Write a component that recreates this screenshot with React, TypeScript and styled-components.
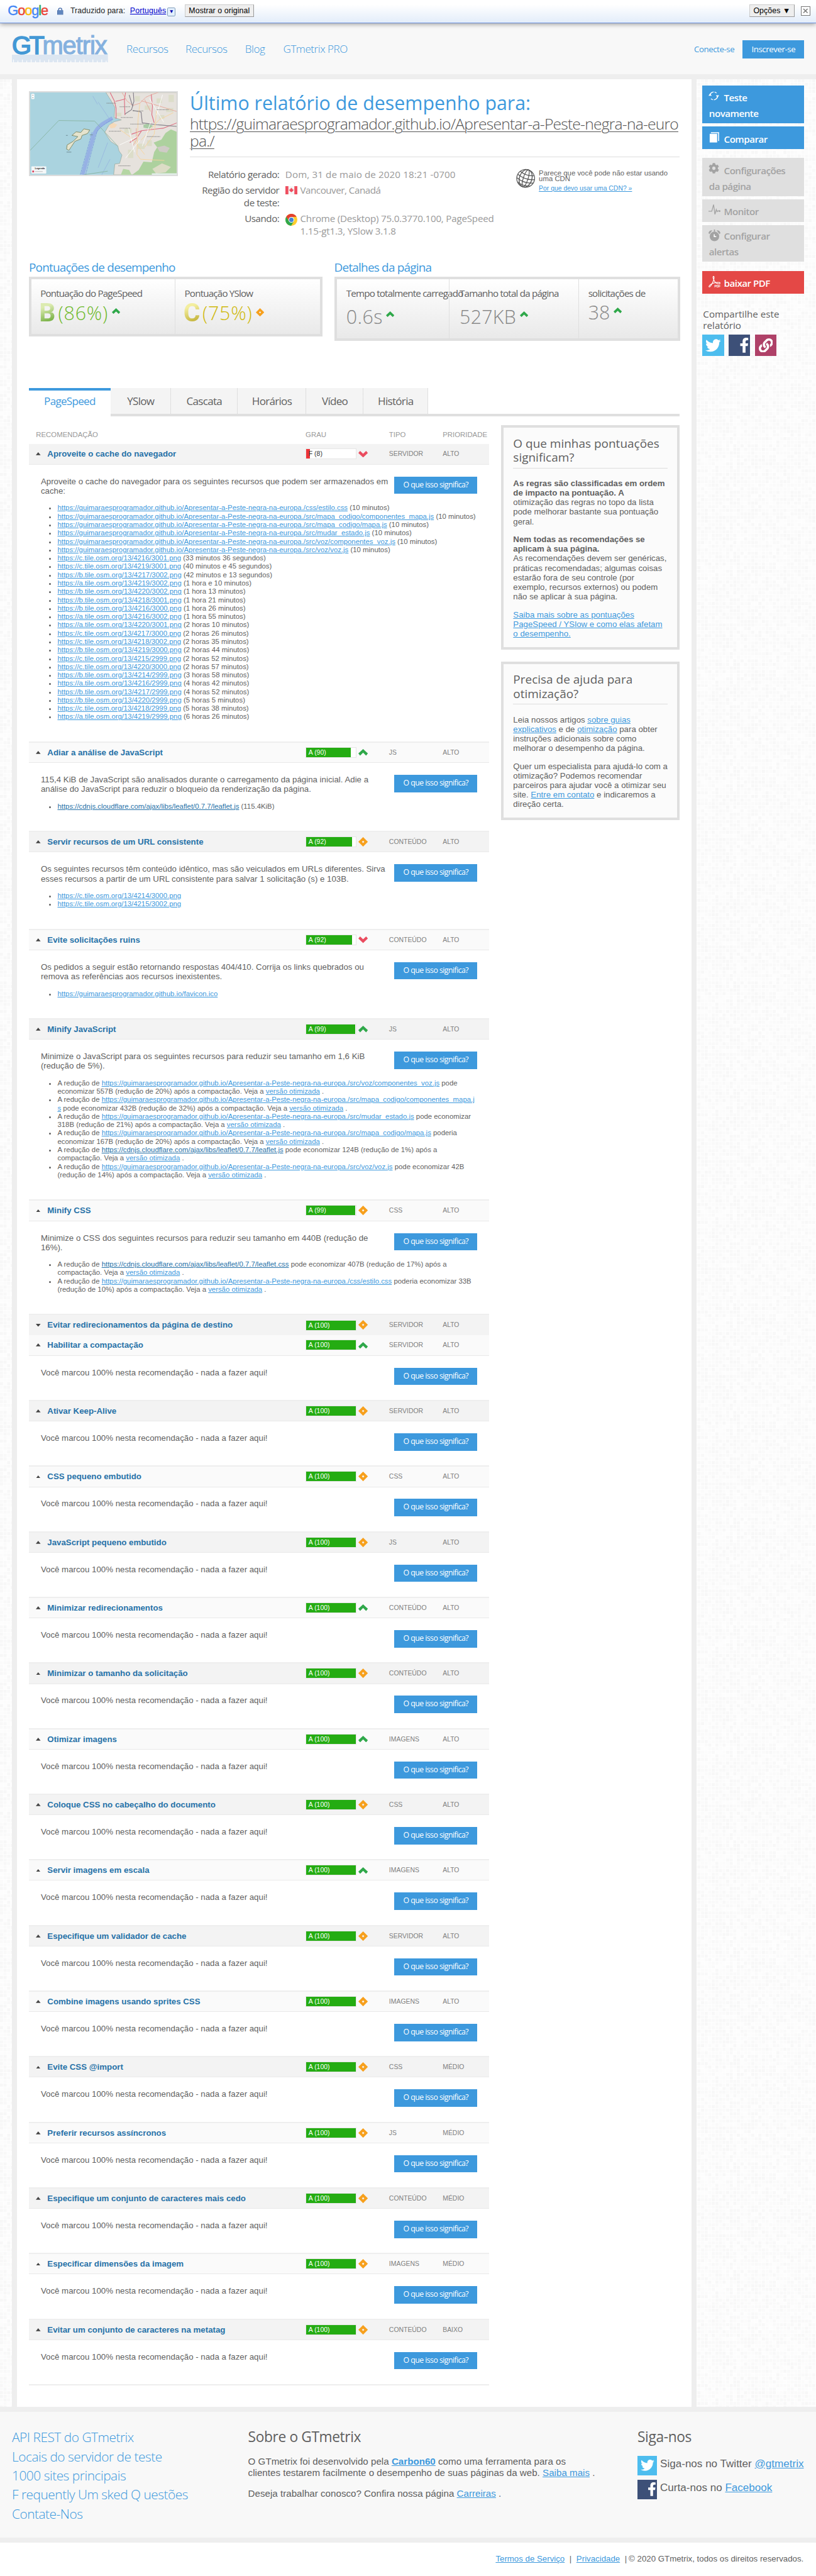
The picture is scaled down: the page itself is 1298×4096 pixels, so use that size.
import React from 'react';
import styled, { createGlobalStyle, css } from 'styled-components';
import { FaTwitter, FaFacebookF, FaLink, FaCog } from 'react-icons/fa';

const BLUE = '#3d99dd';
const DARK_BLUE = '#2772a8';
const TEXT = '#5f5f5f';
const LINE = '#dfdfdf';
const SANS = '"Liberation Sans", Arial, sans-serif';
const DISPLAY = '"Open Sans", "Noto Sans", sans-serif';

/* Faint grid of small squares used behind the page */
const buildTexture = () => {
  let seed = 7;
  let cells = '';
  for (let y = 0; y < 30; y++) {
    for (let x = 0; x < 30; x++) {
      seed = (seed * 16807) % 2147483647;
      const shade = 247 + (seed % 7);
      cells += `<rect x="${x * 6}" y="${y * 6}" width="5" height="5" fill="rgb(${shade},${shade},${shade})"/>`;
    }
  }
  const svg = `<svg xmlns="http://www.w3.org/2000/svg" width="180" height="180"><rect width="180" height="180" fill="#fff"/>${cells}</svg>`;
  return `url("data:image/svg+xml,${encodeURIComponent(svg)}")`;
};
const TEXTURE = buildTexture();

const GlobalStyle = createGlobalStyle`
  html, body { margin: 0; padding: 0; background: #fff; }
  body { overflow: hidden; }
  *, *::before, *::after { box-sizing: border-box; }
  h1, h2, h3, p, ul { margin: 0; padding: 0; font-weight: 400; }
  svg { display: block; flex: none; }
`;

const Page = styled.div`
  zoom: 0.94858;
  width: 1368.5px;
  height: 4318px;
  background: #fff;
  color: ${TEXT};
  font: 14px/16px ${SANS};
  white-space: nowrap;
`;

const A = styled.a<{ $dark?: boolean; $bold?: boolean }>`
  color: ${(p) => (p.$dark ? DARK_BLUE : BLUE)};
  font-weight: ${(p) => (p.$bold ? 700 : 'inherit')};
  text-decoration: underline;
`;

/* ---------- translate bar ---------- */
const TranslateBar = styled.div`
  position: relative;
  z-index: 1;
  height: 39px;
  display: flex;
  align-items: flex-start;
  padding: 7px 10px 0 13px;
  background: linear-gradient(#fff 20%, #e3edfa);
  border-bottom: 1px solid #6b90da;
  box-shadow: 0 2px 8px rgba(0, 0, 0, 0.4);
  color: #222;
  font-size: 13px;
  line-height: 23px;
`;
const GoogleWord = styled.span`
  width: 83px;
  font-size: 23px;
  line-height: 21px;
  letter-spacing: -1.15px;
`;
const Letter = styled.span<{ $c: string }>`
  color: ${(p) => p.$c};
  -webkit-text-stroke: 0.4px ${(p) => p.$c};
`;
const BarText = styled.span`
  margin: 0 8px 0 12px;
  letter-spacing: 0.1px;
`;
const BarLink = styled.a`
  color: #0000cc;
  text-decoration: underline;
  letter-spacing: 0.15px;
`;
const Picker = styled.span`
  width: 14px;
  height: 14px;
  margin: 6px 15px 0 2px;
  border: 1px solid #7f9db9;
  border-radius: 2px;
  background: #e3f0ff;
  color: #0000aa;
  font-size: 9px;
  line-height: 11px;
  text-align: center;
`;
const SysButton = styled.button`
  height: 22px;
  padding: 0 6px;
  border: 1px solid;
  border-color: #ccc #999 #999 #ccc;
  background: #eee;
  color: #000;
  font: 13px/19px ${SANS};
  letter-spacing: 0.1px;
  white-space: nowrap;
`;
const BarRight = styled.div`
  display: flex;
  gap: 11px;
  margin-left: auto;
`;
const CloseBox = styled.span`
  width: 15px;
  height: 15px;
  margin-top: 4px;
  border: 1px solid #777;
  background: #fff;
  display: flex;
  align-items: center;
  justify-content: center;
`;

/* ---------- header ---------- */
const Header = styled.header`
  height: 94px;
  display: flex;
  align-items: flex-start;
  padding: 0 20px;
  background: #f8f8f8;
  border-bottom: 8.44px solid #eee;
`;
const Logo = styled.div`
  width: 161px;
  padding-top: 16px;
  background: linear-gradient(#dce6f1, #dce6f1) 0 53px / 161px 13px no-repeat;
`;
const LogoWord = styled.div`
  display: flex;
  height: 37px;
  font-size: 42px;
  line-height: 44px;
`;
const LogoPart = styled.span<{ $c: string; $ls: number; $stroke: number }>`
  color: ${(p) => p.$c};
  letter-spacing: ${(p) => p.$ls}px;
  -webkit-text-stroke: ${(p) => `${p.$stroke}px ${p.$c}`};
`;
const Nav = styled.nav`
  display: flex;
  gap: 30px;
  margin: 32px 0 0 31px;
`;
const NavLink = styled.a<{ $w: number }>`
  width: ${(p) => p.$w}px;
  color: ${BLUE};
  font: 300 18px/24px ${DISPLAY};
  letter-spacing: -0.5px;
`;
const Account = styled.div`
  display: flex;
  gap: 14px;
  margin: 29px 0 0 auto;
  font: 14px/30px ${DISPLAY};
  letter-spacing: -0.45px;
  color: ${BLUE};
`;
const SignUp = styled.a`
  width: 103px;
  text-align: center;
  background: ${BLUE};
  color: #fff;
`;

/* ---------- page body ---------- */
const Body = styled.div`
  display: flex;
  height: 3901px;
  background: ${TEXTURE};
`;
const Main = styled.main`
  width: 1148px;
  margin-left: 20px;
  padding: 0 20px;
  background: #fff;
  border: solid #eee;
  border-width: 0 8.44px;
`;
const Sidebar = styled.aside`
  width: 200px;
  padding: 10px 20px 0 10px;
`;

/* ---------- report head ---------- */
const Head = styled.section`
  display: flex;
  gap: 20px;
  height: 283px;
  padding-top: 20px;
`;
const Thumb = styled.div`
  width: 250px;
  height: 142px;
  border: 2.12px solid #dcdcdc;
`;
const HeadText = styled.div`
  flex: 1;
`;
const Title = styled.h1`
  margin-top: 2px;
  color: ${BLUE};
  font: 400 32px/36px ${DISPLAY};
`;
const ReportUrl = styled.p`
  margin-top: 3px;
  font: 300 26px/28px ${DISPLAY};
  letter-spacing: -0.85px;
  color: #555;
  text-decoration: underline;
  text-underline-offset: 3px;
  text-decoration-thickness: 1.5px;
`;
const HeadInfo = styled.div`
  display: flex;
  margin-top: 12px;
  padding-top: 20px;
  border-top: 1px solid #ddd;
`;
const Facts = styled.dl`
  display: grid;
  grid-template-columns: 150px auto;
  gap: 5px 10px;
  margin: 0;
  font: 16px/21px ${DISPLAY};
`;
const FactLabel = styled.dt`
  text-align: right;
  letter-spacing: -0.5px;
`;
const FactValue = styled.dd<{ $ls?: number }>`
  display: flex;
  gap: 5px;
  margin: 0;
  color: #999;
  letter-spacing: ${(p) => p.$ls ?? -0.22}px;
`;
const Cdn = styled.div`
  display: flex;
  gap: 6px;
  width: 274px;
  margin-left: auto;
`;
const CdnText = styled.div`
  padding-top: 3px;
  font-size: 12px;
  line-height: 9px;
`;
const CdnLink = styled(A)`
  display: block;
  margin-top: 5px;
  font-size: 11px;
  line-height: 14px;
`;

/* ---------- scores ---------- */
const Scores = styled.section`
  display: flex;
  gap: 20px;
  height: 235px;
  padding-top: 20px;
`;
const ScoreGroup = styled.div<{ $w: number }>`
  width: ${(p) => p.$w}px;
`;
const ScoreHeading = styled.h2`
  height: 28px;
  color: ${BLUE};
  font: 400 20px/24px ${DISPLAY};
  letter-spacing: -0.85px;
`;
const ScoreBox = styled.div<{ $h: number }>`
  display: flex;
  height: ${(p) => p.$h}px;
  border: 4.22px solid ${LINE};
  background: linear-gradient(#fff, #e9e9e9);
`;
const ScoreCell = styled.div<{ $w: number; $pad: number }>`
  width: ${(p) => p.$w}px;
  padding: 14px 0 0 ${(p) => p.$pad}px;
  font: 16px/20px ${DISPLAY};
  letter-spacing: -0.85px;
  & + & {
    border-left: 1px solid ${LINE};
  }
`;
const ScoreValue = styled.div<{ $c?: string; $top: number; $ls?: number }>`
  display: flex;
  align-items: flex-start;
  margin-top: ${(p) => p.$top}px;
  color: ${(p) => p.$c ?? '#888'};
  font: 300 32px/36px ${DISPLAY};
  letter-spacing: ${(p) => p.$ls ?? 0}px;
`;
const Trend = styled.span<{ $gap: number }>`
  margin: 9px 0 0 ${(p) => p.$gap}px;
`;
const GradeLetter = styled.span<{ $from: string; $to: string }>`
  width: 28px;
  margin: -7px 4px 0 -2px;
  font: 700 43px/50px Roboto, sans-serif;
  letter-spacing: 0;
  color: transparent;
  background: linear-gradient(160deg, ${(p) => p.$from} 30%, ${(p) => p.$to} 75%);
  -webkit-background-clip: text;
  background-clip: text;
`;

/* ---------- tabs ---------- */
const Tabs = styled.div`
  display: flex;
  height: 47px;
`;
const Tab = styled.a<{ $w: number; $active?: boolean }>`
  width: ${(p) => p.$w}px;
  padding-top: 10px;
  text-align: center;
  font: 18px/24px ${DISPLAY};
  letter-spacing: -0.75px;
  ${(p) =>
    p.$active
      ? css`
          padding-top: 6px;
          color: ${BLUE};
          border-top: 4.22px solid ${BLUE};
        `
      : css`
          background: linear-gradient(#ddd, #ddd) right top / 1px 100% no-repeat #f4f4f4;
          border-bottom: 4.22px solid ${LINE};
        `}
`;
const TabFill = styled.div`
  flex: 1;
  border-bottom: 4.22px solid ${LINE};
`;

/* ---------- recommendations ---------- */
const Columns = styled.div`
  display: flex;
  gap: 20px;
`;
const Rules = styled.div`
  width: 772px;
  padding-top: 23px;
`;
const rowGrid = css`
  display: grid;
  grid-template-columns: 452px 140px 90px 78px;
  padding-left: 12px;
`;
const RulesHead = styled.div`
  ${rowGrid}
  height: 23px;
  color: #999;
  font-size: 12px;
  line-height: 16px;
`;
const RuleRow = styled.div<{ $alt: boolean; $top: boolean; $open: boolean }>`
  ${rowGrid}
  align-items: center;
  height: ${(p) => (p.$top && p.$open ? 36 : 35)}px;
  background: ${(p) => (p.$alt ? '#fafafa' : '#f3f3f3')};
  border-top: ${(p) => (p.$top ? '2.12px solid #eee' : '0')};
  border-bottom: ${(p) => (p.$open ? '1px solid #e9e9e9' : '0')};
  color: #808080;
  font-size: 11px;
`;
const RuleTitle = styled.span`
  display: flex;
  align-items: center;
  gap: 11px;
  color: ${DARK_BLUE};
  font-size: 14px;
  font-weight: 700;
`;
const Grade = styled.span`
  display: flex;
  align-items: center;
  gap: 4px;
`;
const GradeBar = styled.span<{ $fill: number; $bad: boolean }>`
  width: 85px;
  height: 18px;
  padding-left: 4px;
  border: 1px solid #e6e6e6;
  background: linear-gradient(
    90deg,
    ${(p) => (p.$bad ? '#ee3338' : '#24ac12')} ${(p) => p.$fill}%,
    #fff ${(p) => p.$fill}%
  );
  color: ${(p) => (p.$bad ? '#333' : '#fff')};
  font-size: 11px;
  line-height: 16px;
`;
const Details = styled.div<{ $list: boolean }>`
  min-height: 74px;
  padding: 20px 20px ${(p) => (p.$list ? 34 : 0)}px;
`;
const DetailsTop = styled.div`
  display: flex;
  justify-content: space-between;
  align-items: flex-start;
`;
const HelpButton = styled.a`
  width: 139px;
  height: 29px;
  background: ${BLUE};
  color: #fff;
  text-align: center;
  font: 13px/28px ${DISPLAY};
  letter-spacing: -0.58px;
`;
const Links = styled.ul`
  margin-top: 14px;
  padding-left: 28px;
  list-style: disc;
  font-size: 12px;
  line-height: 14px;
`;
const EndLine = styled.div`
  height: 2px;
  background: #eee;
`;

/* ---------- info boxes ---------- */
const Aside = styled.div`
  display: flex;
  flex-direction: column;
  gap: 20px;
  width: 300px;
  padding-top: 15px;
`;
const InfoBox = styled.section<{ $h: number }>`
  height: ${(p) => p.$h}px;
  padding: 14px 16px;
  border: 4.22px solid ${LINE};
  background: #fbfbfb;
`;
const InfoTitle = styled.h3`
  margin-bottom: 17px;
  padding-bottom: 5px;
  border-bottom: 1px solid #ddd;
  font: 400 20px/24px ${DISPLAY};
`;
const Para = styled.p`
  margin-bottom: 14px;
`;

/* ---------- sidebar ---------- */
const SideButton = styled.a<{ $h: number; $bg: string; $c: string; $gap: number; $pad?: number }>`
  display: block;
  height: ${(p) => p.$h}px;
  margin-bottom: ${(p) => p.$gap}px;
  padding: ${(p) => p.$pad ?? 8}px 0 0 11px;
  background: ${(p) => p.$bg};
  color: ${(p) => p.$c};
  font: 600 16px/26px ${DISPLAY};
  letter-spacing: -0.55px;
`;
const SideIcon = styled.span`
  display: inline-block;
  width: 25px;
  height: 20px;
  vertical-align: top;
  svg { margin-left: -1px; }
`;
const Share = styled.p`
  margin: 25px 0 6px 1px;
  font: 16px/19px ${DISPLAY};
`;
const Socials = styled.div`
  display: flex;
  gap: 8px;
`;
const Social = styled.span<{ $bg: string; $s: number; $end?: boolean }>`
  display: flex;
  align-items: center;
  justify-content: ${(p) => (p.$end ? 'flex-end' : 'center')};
  width: ${(p) => p.$s}px;
  height: ${(p) => p.$s}px;
  background: ${(p) => p.$bg};
  color: #fff;
`;

/* ---------- footer ---------- */
const Footer = styled.footer`
  display: grid;
  grid-template-columns: 396px 653px auto;
  height: 228px;
  padding: 27px 0 0 20px;
  background: #f8f8f8;
  border: solid #eee;
  border-width: 8.44px 0;
`;
const FootLinks = styled.nav`
  display: flex;
  flex-direction: column;
  color: ${BLUE};
  font: 300 22px/32px ${DISPLAY};
  letter-spacing: -0.5px;
`;
const FootTitle = styled.h3`
  margin-bottom: 15px;
  font: 400 24px/32px ${DISPLAY};
  letter-spacing: -0.4px;
`;
const FootText = styled.p`
  margin-bottom: 16px;
  font-size: 16px;
  line-height: 19px;
`;
const Follow = styled.div`
  display: flex;
  gap: 5px;
  margin-bottom: 7px;
  font-size: 18px;
  line-height: 28px;
`;
const Legal = styled.div`
  display: flex;
  justify-content: flex-end;
  padding: 18px 21px 0;
  line-height: 20px;
`;
const Bar = styled.span<{ $r: number }>`
  margin: 0 ${(p) => p.$r}px 0 8px;
`;

/* ---------- drawings ---------- */
const Up = ({ w = 16 }: { w?: number }) => (
  <svg width={w} height={(w * 11) / 16} viewBox="0 0 16 11">
    <path d="M8 0 L16 7.5 L13 11 L8 6.2 L3 11 L0 7.5 Z" fill="#2fa84a" />
  </svg>
);
const Down = () => (
  <svg width="16" height="11" viewBox="0 0 16 11">
    <path d="M8 11 L16 3.5 L13 0 L8 4.8 L3 0 L0 3.5 Z" fill="#ea4c5f" />
  </svg>
);
const Same = ({ w = 16 }: { w?: number }) => (
  <svg width={w} height={w} viewBox="0 0 16 16">
    <path d="M8 0 L16 8 L8 16 L0 8 Z M8 6 L6 8 L8 10 L10 8 Z" fill="#f7a01d" fillRule="evenodd" />
  </svg>
);
const trends = { up: <Up />, down: <Down />, same: <Same /> };

const Ruler = () => (
  <svg width="161" height="13" viewBox="0 0 161 13">
    {Array.from({ length: 22 }, (_, i) => (
      <rect key={i} x={2 + i * 7.4} y={i % 2 ? 10 : 8} width="1.2" height="5" fill="#fff" />
    ))}
  </svg>
);

const Lock = () => (
  <svg width="10" height="12" viewBox="0 0 10 12" style={{ marginTop: 6 }}>
    <path d="M2.3 6V3.6a2.7 2.7 0 0 1 5.4 0V6" fill="none" stroke="#4a6ea9" strokeWidth="1.4" />
    <rect x="0.5" y="5" width="9" height="6.5" fill="#7fa6dc" stroke="#4a6ea9" />
    <path d="M1 7.2h8M1 9.4h8" stroke="#3a5e99" />
  </svg>
);

const MapThumb = () => (
  <svg width="246" height="138" viewBox="0 0 246 138">
    <rect width="246" height="138" fill="#aad3df" />
    <path d="M127 0 L132 8 L137 16 L142 25 L141 42 L153 46 L141 49 L132 55 L125 67 L131 76 L135 82 L147 90 L149 98 L154 105 L150 119 L142 120 L140 138 L246 138 L246 0 Z" fill="#e6e2dd" stroke="#8d9c8a" strokeWidth=".6" />
    <g fill="#d9dcc4" opacity=".8">
      <path d="M176 6h8v9h-8zM192 22h10v7h-10zM212 10h9v8h-9zM228 26h12v7h-12zM216 38h9v6h-9zM180 86h12v9h-12zM164 96h9v14h-9zM196 80h8v10h-8zM158 60h12v8h-12zM144 34h9v6h-9zM232 4h9v12h-9z" />
    </g>
    <path d="M190 54l8-2 8 4-6 5-10-2z" fill="#a9cba5" />
    <path d="M132 55l7-4 7 3-4 5-7 1z" fill="#f5d9b8" />
    <path d="M227 68 L236 62 L246 66 V138 H171 L182 130 L190 116 L204 117 L208 100 L213 92 L207 84 L220 79 Z" fill="#add19e" />
    <path d="M213 92l12-3 9 4-5 8-12-2z" fill="#cfcbc6" />
    <path d="M205 128l16-9 15 6-9 9-16 2z" fill="#dcdcc6" />
    <path d="M152 138l4-10 10 2 4 8z" fill="#b5d6a4" />
    <g fill="none" strokeWidth="1.2">
      <path d="M134 0l7 14 3 12v18M160 0l-2 12 1 26M203 3l2 20-1 14 4 14M143 15l16-4M170 70l17-6 36-4 23-9M187 64l-8 12-12 8" stroke="#dd6d80" />
      <path d="M154 0l8 14 10 8 12-4 10-10 9-4 14-5M186 14l28 8 32 10M192 12l10 20M178 60v20l-6 10" stroke="#e79a8c" strokeWidth=".8" />
      <path d="M173 0l1 15-4 14-11 7M172 30l14 3 2 18 24 3 34 3M166 4l6 20" stroke="#85808a" />
      <path d="M184 18l-3 26-2 60 6 8 40 2M212 30l-4 40-16 22M150 62l20 14 22 28M240 34l-24 12-30 34" stroke="#f7d49c" strokeWidth="1" />
      <path d="M160 110l24-30M165 60l10 40M200 10l24 40M222 4l-10 34M150 88l30-14M188 90l14-40" stroke="#fff" strokeWidth=".9" />
    </g>
    <g stroke="#777" strokeWidth=".8" strokeDasharray="2 .6">
      <path d="M128 18h16M150 24h18M172 31h18M152 42h20M168 53h22M132 65h20M150 60h18M212 29h20M196 74h22M148 123h20" />
    </g>
    <path d="M88 138 L100 95 L106 73 Q110 60 122 52 L138 43" fill="none" stroke="#8fa5e6" strokeWidth="6" opacity=".75" />
    <path d="M93 138 L104 95 L112 66 Q116 58 138 45M84 138 L96 95 L104 66" fill="none" stroke="#6d86dd" strokeWidth=".7" strokeDasharray="4 1" />
    <path d="M105 6l8 14M114 16l24 36M130 84l-16 42M120 138l14-26" fill="none" stroke="#8da7df" strokeWidth=".6" />
    <path d="M0 97 L48 47 L108 48 L147 90M90 138l40-6" fill="none" stroke="#86b39f" strokeWidth=".9" />
    <path d="M77 66l8 1 5-6 10 2-4 6-9 3-2 6-10 4-6 9-4 6-4-2 1-7 10-6 8-8-10-2z" fill="#e5e3cd" stroke="#7d8a66" strokeWidth="1" />
    <path d="M60 72h3M100 71h5M61 100h8" stroke="#6d8892" strokeWidth="1" />
    <rect x="2" y="2" width="5" height="9" rx="1" fill="#fff" />
    <path d="M3.5 4.5h2M3.5 8.7h2" stroke="#555" strokeWidth=".7" />
    <rect x="2" y="124" width="25" height="12" rx="1" fill="#f4f7f8" />
    <text x="8" y="129" fontSize="4" fontWeight="700" fontFamily="Liberation Sans" fill="#222">Legenda</text>
    <rect x="3.5" y="131" width="3" height="3" fill="#d8415c" />
    <path d="M8 132.6h13" stroke="#bbb" strokeWidth="1" />
    <rect x="204" y="135.6" width="42" height="2.4" fill="#e6f0ee" />
  </svg>
);

const Flag = () => (
  <svg width="20" height="14" viewBox="0 0 20 14" style={{ marginTop: 3 }}>
    <rect width="20" height="14" fill="#f5f5f5" />
    <path d="M0 0h5v14H0zM15 0h5v14h-5z" fill="#ef4f60" />
    <path d="M10 2.5l1 1.8 1-.4-.2 2 1.7-.5-.4 1.2.7.5-2.2 1.6.2.9-1.6-.2V11h-.4V9.4l-1.6.2.2-.9-2.2-1.6.7-.5-.4-1.2 1.7.5-.2-2 1 .4z" fill="#ef4f60" />
  </svg>
);

const ChromeIcon = () => (
  <svg width="20" height="20" viewBox="0 0 20 20" style={{ marginTop: 2 }}>
    <circle cx="10" cy="10" r="10" fill="#ffcd2e" />
    <path d="M1.34 5 A10 10 0 0 1 18.66 5 L10 5.3 L6 12.2 Z" fill="#e2402f" />
    <path d="M1.34 5 A10 10 0 0 0 9.6 20 L14.1 12.3 L6.2 12.6 Z" fill="#2fa84c" />
    <circle cx="10" cy="10" r="4.7" fill="#fff" />
    <circle cx="10" cy="10" r="3.7" fill="#4285d6" />
  </svg>
);

const GlobeIcon = () => (
  <svg width="32" height="33" viewBox="0 0 32 33">
    <g transform="rotate(18 16 16.5)" fill="none" stroke="#555" strokeWidth="1.3">
      <circle cx="16" cy="16.5" r="15" />
      <ellipse cx="16" cy="16.5" rx="10.5" ry="15" />
      <ellipse cx="16" cy="16.5" rx="4" ry="15" />
      <path d="M4 8q12 5 24 0M1.2 14q15 6 29.6 0M1.6 20q14.4 6 28.8 0M5 26.5q11 4 22 0" />
    </g>
  </svg>
);

const RetestIcon = () => (
  <svg width="18" height="20" viewBox="0 0 18 20">
    <g fill="none" stroke="#fff" strokeWidth="1.4">
      <path d="M2.4 9A6.6 6.6 0 0 1 13.5 5.2M15.2 11A6.6 6.6 0 0 1 4.2 14.8" strokeDasharray="9 1.5" />
    </g>
    <path d="M0 9.8l2.6-4 2.8 4zM12.4 9l2.8 4 2.6-4z" fill="#fff" />
  </svg>
);
const CompareIcon = () => (
  <svg width="18" height="20" viewBox="0 0 18 20">
    <path d="M4 2h13v14" fill="none" stroke="#fff" strokeWidth="1.6" />
    <rect x="2" y="4" width="12.5" height="14.5" fill="#fff" />
  </svg>
);
const PulseIcon = () => (
  <svg width="20" height="20" viewBox="0 0 20 20">
    <path d="M0 12.5h5.5L8.5 1.5l2.3 16.2 2.2-8 1.4 3.6 1.2-1.3h3" fill="none" stroke="#a3a3a3" strokeWidth="1.4" />
    <circle cx="18.5" cy="12.3" r="1.5" fill="#a3a3a3" />
  </svg>
);
const AlarmIcon = () => (
  <svg width="20" height="22" viewBox="0 0 20 22">
    <circle cx="10" cy="13.5" r="8" fill="#a3a3a3" />
    <path d="M0 8.5Q.5 3 6.5 3.4L1.8 9.5zM20 8.5Q19.5 3 13.5 3.4l4.7 6.1z" fill="#a3a3a3" />
    <path d="M10 2v4" stroke="#a3a3a3" strokeWidth="2" />
    <path d="M9.6 10v4h3.4" fill="none" stroke="#fff" strokeWidth="1.6" />
  </svg>
);
const PdfIcon = () => (
  <svg width="21" height="22" viewBox="0 0 21 22">
    <path d="M8.5 1.5c-2.5 0 .5 8 4 11 3 2 7 2 7 .2 0-2-9-1-13 .8-4 2-6.5 4.600-5.5 5.600 1.600 1.200 5-4.500 7-9.600C9.500 6 10 1.500 8.500 1.500z" fill="none" stroke="#fff" strokeWidth="1.2" />
    <text x="10" y="20" fontFamily="Liberation Sans" fontWeight="700" fontSize="5.2" letterSpacing="0" fill="#fff">PDF</text>
  </svg>
);

/* ---------- data ---------- */
const SITE = 'https://guimaraesprogramador.github.io/Apresentar-a-Peste-negra-na-europa./';
const LEAFLET = 'https://cdnjs.cloudflare.com/ajax/libs/leaflet/0.7.7/leaflet.';

const cached: [string, string][] = [
  [SITE + 'css/estilo.css', '10 minutos'],
  [SITE + 'src/mapa_codigo/componentes_mapa.js', '10 minutos'],
  [SITE + 'src/mapa_codigo/mapa.js', '10 minutos'],
  [SITE + 'src/mudar_estado.js', '10 minutos'],
  [SITE + 'src/voz/componentes_voz.js', '10 minutos'],
  [SITE + 'src/voz/voz.js', '10 minutos'],
  ...(
    [
      ['c', '4216/3001', '33 minutos 36 segundos'],
      ['c', '4219/3001', '40 minutos e 45 segundos'],
      ['b', '4217/3002', '42 minutos e 13 segundos'],
      ['a', '4219/3002', '1 hora e 10 minutos'],
      ['b', '4220/3002', '1 hora 13 minutos'],
      ['b', '4218/3001', '1 hora 21 minutos'],
      ['b', '4216/3000', '1 hora 26 minutos'],
      ['a', '4216/3002', '1 hora 55 minutos'],
      ['a', '4220/3001', '2 horas 10 minutos'],
      ['c', '4217/3000', '2 horas 26 minutos'],
      ['c', '4218/3002', '2 horas 35 minutos'],
      ['b', '4219/3000', '2 horas 44 minutos'],
      ['c', '4215/2999', '2 horas 52 minutos'],
      ['c', '4220/3000', '2 horas 57 minutos'],
      ['b', '4214/2999', '3 horas 58 minutos'],
      ['a', '4216/2999', '4 horas 42 minutos'],
      ['b', '4217/2999', '4 horas 52 minutos'],
      ['b', '4220/2999', '5 horas 5 minutos'],
      ['c', '4218/2999', '5 horas 38 minutos'],
      ['a', '4219/2999', '6 horas 26 minutos'],
    ] as const
  ).map(([h, t, d]): [string, string] => [`https://${h}.tile.osm.org/13/${t}.png`, d]),
];

const Saving = ({ url, dark, before, after }: { url: React.ReactNode; dark?: boolean; before: string; after: string }) => (
  <li>
    A redução de <A $dark={dark}>{url}</A> {before}
    {before && <br />}
    {after} Veja a <A>versão otimizada</A> .
  </li>
);

type Rule = {
  title: string;
  score: number;
  trend: keyof typeof trends;
  type: string;
  priority?: string;
  closed?: boolean;
  text?: React.ReactNode;
  list?: React.ReactNode;
};

const rules: Rule[] = [
  {
    title: 'Aproveite o cache do navegador', score: 8, trend: 'down', type: 'SERVIDOR',
    text: <>Aproveite o cache do navegador para os seguintes recursos que podem ser armazenados em<br />cache:</>,
    list: cached.map(([url, d]) => <li key={url}><A>{url}</A> ({d})</li>),
  },
  {
    title: 'Adiar a análise de JavaScript', score: 90, trend: 'up', type: 'JS',
    text: <>115,4 KiB de JavaScript são analisados durante o carregamento da página inicial. Adie a<br />análise do JavaScript para reduzir o bloqueio da renderização da página.</>,
    list: <li><A $dark>{LEAFLET}js</A> (115.4KiB)</li>,
  },
  {
    title: 'Servir recursos de um URL consistente', score: 92, trend: 'same', type: 'CONTEÚDO',
    text: <>Os seguintes recursos têm conteúdo idêntico, mas são veiculados em URLs diferentes. Sirva<br />esses recursos a partir de um URL consistente para salvar 1 solicitação (s) e 103B.</>,
    list: <><li><A>https://c.tile.osm.org/13/4214/3000.png</A></li><li><A>https://c.tile.osm.org/13/4215/3002.png</A></li></>,
  },
  {
    title: 'Evite solicitações ruins', score: 92, trend: 'down', type: 'CONTEÚDO',
    text: <>Os pedidos a seguir estão retornando respostas 404/410. Corrija os links quebrados ou<br />remova as referências aos recursos inexistentes.</>,
    list: <li><A>https://guimaraesprogramador.github.io/favicon.ico</A></li>,
  },
  {
    title: 'Minify JavaScript', score: 99, trend: 'up', type: 'JS',
    text: <>Minimize o JavaScript para os seguintes recursos para reduzir seu tamanho em 1,6 KiB<br />(redução de 5%).</>,
    list: (
      <>
        <Saving url={SITE + 'src/voz/componentes_voz.js'} before="pode" after="economizar 557B (redução de 20%) após a compactação." />
        <Saving url={<>{SITE}src/mapa_codigo/componentes_mapa.j<br />s</>} before="" after="pode economizar 432B (redução de 32%) após a compactação." />
        <Saving url={SITE + 'src/mudar_estado.js'} before="pode economizar" after="318B (redução de 21%) após a compactação." />
        <Saving url={SITE + 'src/mapa_codigo/mapa.js'} before="poderia" after="economizar 167B (redução de 20%) após a compactação." />
        <Saving dark url={LEAFLET + 'js'} before="pode economizar 124B (redução de 1%) após a" after="compactação." />
        <Saving url={SITE + 'src/voz/voz.js'} before="pode economizar 42B" after="(redução de 14%) após a compactação." />
      </>
    ),
  },
  {
    title: 'Minify CSS', score: 99, trend: 'same', type: 'CSS',
    text: <>Minimize o CSS dos seguintes recursos para reduzir seu tamanho em 440B (redução de<br />16%).</>,
    list: (
      <>
        <Saving dark url={LEAFLET + 'css'} before="pode economizar 407B (redução de 17%) após a" after="compactação." />
        <Saving url={SITE + 'css/estilo.css'} before="poderia economizar 33B" after="(redução de 10%) após a compactação." />
      </>
    ),
  },
  { title: 'Evitar redirecionamentos da página de destino', score: 100, trend: 'same', type: 'SERVIDOR', closed: true },
  { title: 'Habilitar a compactação', score: 100, trend: 'up', type: 'SERVIDOR' },
  { title: 'Ativar Keep-Alive', score: 100, trend: 'same', type: 'SERVIDOR' },
  { title: 'CSS pequeno embutido', score: 100, trend: 'same', type: 'CSS' },
  { title: 'JavaScript pequeno embutido', score: 100, trend: 'same', type: 'JS' },
  { title: 'Minimizar redirecionamentos', score: 100, trend: 'up', type: 'CONTEÚDO' },
  { title: 'Minimizar o tamanho da solicitação', score: 100, trend: 'same', type: 'CONTEÚDO' },
  { title: 'Otimizar imagens', score: 100, trend: 'up', type: 'IMAGENS' },
  { title: 'Coloque CSS no cabeçalho do documento', score: 100, trend: 'same', type: 'CSS' },
  { title: 'Servir imagens em escala', score: 100, trend: 'up', type: 'IMAGENS' },
  { title: 'Especifique um validador de cache', score: 100, trend: 'same', type: 'SERVIDOR' },
  { title: 'Combine imagens usando sprites CSS', score: 100, trend: 'same', type: 'IMAGENS' },
  { title: 'Evite CSS @import', score: 100, trend: 'same', type: 'CSS', priority: 'MÉDIO' },
  { title: 'Preferir recursos assíncronos', score: 100, trend: 'same', type: 'JS', priority: 'MÉDIO' },
  { title: 'Especifique um conjunto de caracteres mais cedo', score: 100, trend: 'same', type: 'CONTEÚDO', priority: 'MÉDIO' },
  { title: 'Especificar dimensões da imagem', score: 100, trend: 'same', type: 'IMAGENS', priority: 'MÉDIO' },
  { title: 'Evitar um conjunto de caracteres na metatag', score: 100, trend: 'same', type: 'CONTEÚDO', priority: 'BAIXO' },
];

const RuleItem = ({ rule, index }: { rule: Rule; index: number }) => {
  const afterClosed = index > 0 && !!rules[index - 1].closed;
  return (
    <>
      <RuleRow $alt={index % 2 === 1} $top={index > 0 && !afterClosed} $open={!rule.closed}>
        <RuleTitle>
          <svg width="8" height="5" viewBox="0 0 8 5">
            <path d={rule.closed ? 'M0 0h8L4 5z' : 'M0 5h8L4 0z'} fill="#444" />
          </svg>
          {rule.title}
        </RuleTitle>
        <Grade>
          <GradeBar $fill={rule.score} $bad={rule.score < 50}>
            {rule.score < 50 ? 'F' : 'A'} ({rule.score})
          </GradeBar>
          {trends[rule.trend]}
        </Grade>
        <span>{rule.type}</span>
        <span>{rule.priority ?? 'ALTO'}</span>
      </RuleRow>
      {!rule.closed && (
        <Details $list={!!rule.list}>
          <DetailsTop>
            <p>{rule.text ?? 'Você marcou 100% nesta recomendação - nada a fazer aqui!'}</p>
            <HelpButton>O que isso significa?</HelpButton>
          </DetailsTop>
          {rule.list && <Links>{rule.list}</Links>}
        </Details>
      )}
    </>
  );
};

const GREY = '#dfdfdf';

export default function App() {
  return (
    <Page>
      <GlobalStyle />
      <TranslateBar>
        <GoogleWord>
          <Letter $c="#4285f4">G</Letter>
          <Letter $c="#ea4335">o</Letter>
          <Letter $c="#fbbc05">o</Letter>
          <Letter $c="#4285f4">g</Letter>
          <Letter $c="#34a853">l</Letter>
          <Letter $c="#ea4335">e</Letter>
        </GoogleWord>
        <Lock />
        <BarText>Traduzido para:</BarText>
        <BarLink>Português</BarLink>
        <Picker>▼</Picker>
        <SysButton>Mostrar o original</SysButton>
        <BarRight>
          <SysButton>Opções ▼</SysButton>
          <CloseBox>
            <svg width="9" height="9" viewBox="0 0 9 9"><path d="M1 1l7 7M8 1L1 8" stroke="#777" strokeWidth="1.6" /></svg>
          </CloseBox>
        </BarRight>
      </TranslateBar>

      <Header>
        <Logo>
          <LogoWord>
            <LogoPart $c="#4398d5" $ls={-3.6} $stroke={1.8}>GT</LogoPart>
            <LogoPart $c="#85b1df" $ls={-1.1} $stroke={1.2}>metrix</LogoPart>
          </LogoWord>
          <Ruler />
        </Logo>
        <Nav>
          <NavLink $w={69}>Recursos</NavLink>
          <NavLink $w={70}>Recursos</NavLink>
          <NavLink $w={34}>Blog</NavLink>
          <NavLink $w={111}>GTmetrix PRO</NavLink>
        </Nav>
        <Account>
          <span>Conecte-se</span>
          <SignUp>Inscrever-se</SignUp>
        </Account>
      </Header>

      <Body>
        <Main>
          <Head>
            <Thumb><MapThumb /></Thumb>
            <HeadText>
              <Title>Último relatório de desempenho para:</Title>
              <ReportUrl>https://guimaraesprogramador.github.io/Apresentar-a-Peste-negra-na-euro<br />pa./</ReportUrl>
              <HeadInfo>
                <Facts>
                  <FactLabel>Relatório gerado:</FactLabel>
                  <FactValue $ls={0.12}>Dom, 31 de maio de 2020 18:21 -0700</FactValue>
                  <FactLabel>Região do servidor<br />de teste:</FactLabel>
                  <FactValue $ls={-0.5}><Flag />Vancouver, Canadá</FactValue>
                  <FactLabel>Usando:</FactLabel>
                  <FactValue><ChromeIcon /><span>Chrome (Desktop) 75.0.3770.100, PageSpeed<br />1.15-gt1.3, YSlow 3.1.8</span></FactValue>
                </Facts>
                <Cdn>
                  <GlobeIcon />
                  <CdnText>
                    Parece que você pode não estar usando<br />uma CDN
                    <CdnLink>Por que devo usar uma CDN? »</CdnLink>
                  </CdnText>
                </Cdn>
              </HeadInfo>
            </HeadText>
          </Head>

          <Scores>
            <ScoreGroup $w={492}>
              <ScoreHeading>Pontuações de desempenho</ScoreHeading>
              <ScoreBox $h={100}>
                <ScoreCell $w={241} $pad={15}>
                  Pontuação do PageSpeed
                  <ScoreValue $c="#6fba2c" $top={5} $ls={0.8}>
                    <GradeLetter $from="#dcebb0" $to="#76b043">B</GradeLetter>(86%)
                    <Trend $gap={6}><Up w={14} /></Trend>
                  </ScoreValue>
                </ScoreCell>
                <ScoreCell $w={243} $pad={15}>
                  Pontuação YSlow
                  <ScoreValue $c="#cfb90c" $top={5} $ls={0.8}>
                    <GradeLetter $from="#f3ee9f" $to="#c5b53c">C</GradeLetter>(75%)
                    <Trend $gap={6}><Same w={14} /></Trend>
                  </ScoreValue>
                </ScoreCell>
              </ScoreBox>
            </ScoreGroup>
            <ScoreGroup $w={580}>
              <ScoreHeading>Detalhes da página</ScoreHeading>
              <ScoreBox $h={107}>
                <ScoreCell $w={188} $pad={16}>
                  Tempo totalmente carregado
                  <ScoreValue $top={11} $ls={0.6}>0.6s<Trend $gap={5}><Up w={14} /></Trend></ScoreValue>
                </ScoreCell>
                <ScoreCell $w={217} $pad={17}>
                  Tamanho total da página
                  <ScoreValue $top={11} $ls={0.3}>527KB<Trend $gap={6}><Up w={14} /></Trend></ScoreValue>
                </ScoreCell>
                <ScoreCell $w={167} $pad={16}>
                  solicitações de
                  <ScoreValue $top={4} $ls={0}>38<Trend $gap={6}><Up w={14} /></Trend></ScoreValue>
                </ScoreCell>
              </ScoreBox>
            </ScoreGroup>
          </Scores>

          <Tabs>
            <Tab $w={137} $active>PageSpeed</Tab>
            <Tab $w={101}>YSlow</Tab>
            <Tab $w={112}>Cascata</Tab>
            <Tab $w={115}>Horários</Tab>
            <Tab $w={96}>Vídeo</Tab>
            <Tab $w={108}>História</Tab>
            <TabFill />
          </Tabs>

          <Columns>
            <Rules>
              <RulesHead>
                <span>RECOMENDAÇÃO</span>
                <span>GRAU</span>
                <span>TIPO</span>
                <span>PRIORIDADE</span>
              </RulesHead>
              {rules.map((rule, i) => <RuleItem key={rule.title} rule={rule} index={i} />)}
              <EndLine />
            </Rules>
            <Aside>
              <InfoBox $h={376}>
                <InfoTitle>O que minhas pontuações<br />significam?</InfoTitle>
                <Para>
                  <b>As regras são classificadas em ordem<br />de impacto na pontuação. A</b><br />
                  otimização das regras no topo da lista<br />pode melhorar bastante sua pontuação<br />geral.
                </Para>
                <Para>
                  <b>Nem todas as recomendações se<br />aplicam à sua página.</b><br />
                  As recomendações devem ser genéricas,<br />práticas recomendadas; algumas coisas<br />estarão fora de seu controle (por<br />exemplo, recursos externos) ou podem<br />não se aplicar à sua página.
                </Para>
                <Para><A>Saiba mais sobre as pontuações<br />PageSpeed / YSlow e como elas afetam<br />o desempenho.</A></Para>
              </InfoBox>
              <InfoBox $h={266}>
                <InfoTitle>Precisa de ajuda para<br />otimização?</InfoTitle>
                <Para>
                  Leia nossos artigos <A>sobre guias<br />explicativos</A> e de <A>otimização</A> para obter<br />instruções adicionais sobre como<br />melhorar o desempenho da página.
                </Para>
                <Para>
                  Quer um especialista para ajudá-lo com a<br />otimização? Podemos recomendar<br />parceiros para ajudar você a otimizar seu<br />site. <A>Entre em contato</A> e indicaremos a<br />direção certa.
                </Para>
              </InfoBox>
            </Aside>
          </Columns>
        </Main>

        <Sidebar>
          <SideButton $h={64} $bg={BLUE} $c="#fff" $gap={5}><SideIcon><RetestIcon /></SideIcon>Teste<br />novamente</SideButton>
          <SideButton $h={38} $bg={BLUE} $c="#fff" $gap={15}><SideIcon><CompareIcon /></SideIcon>Comparar</SideButton>
          <SideButton $h={64} $bg={GREY} $c="#a3a3a3" $gap={5}><SideIcon><FaCog size={18} /></SideIcon>Configurações<br />da página</SideButton>
          <SideButton $h={38} $bg={GREY} $c="#a3a3a3" $gap={5}><SideIcon><PulseIcon /></SideIcon>Monitor</SideButton>
          <SideButton $h={62} $bg={GREY} $c="#a3a3a3" $gap={15} $pad={6}><SideIcon><AlarmIcon /></SideIcon>Configurar<br />alertas</SideButton>
          <SideButton $h={38} $bg="#e44846" $c="#fff" $gap={0}><SideIcon><PdfIcon /></SideIcon>baixar PDF</SideButton>
          <Share>Compartilhe este<br />relatório</Share>
          <Socials>
            <Social $s={36} $bg="#4dbdee"><FaTwitter size={26} /></Social>
            <Social $s={36} $bg="#3d5078" $end><FaFacebookF size={25} style={{ marginRight: -3 }} /></Social>
            <Social $s={36} $bg="#af4168"><FaLink size={24} /></Social>
          </Socials>
        </Sidebar>
      </Body>

      <Footer>
        <FootLinks>
          <span>API REST do GTmetrix</span>
          <span>Locais do servidor de teste</span>
          <span>1000 sites principais</span>
          <span>F requently Um sked Q uestões</span>
          <span>Contate-Nos</span>
        </FootLinks>
        <div>
          <FootTitle>Sobre o GTmetrix</FootTitle>
          <FootText>
            O GTmetrix foi desenvolvido pela <A $bold>Carbon60</A> como uma ferramenta para os<br />
            clientes testarem facilmente o desempenho de suas páginas da web. <A>Saiba mais</A> .
          </FootText>
          <FootText>Deseja trabalhar conosco? Confira nossa página <A>Carreiras</A> .</FootText>
        </div>
        <div>
          <FootTitle>Siga-nos</FootTitle>
          <Follow>
            <Social $s={33} $bg="#4dbdee"><FaTwitter size={23} /></Social>
            <span>Siga-nos no Twitter <A>@gtmetrix</A></span>
          </Follow>
          <Follow>
            <Social $s={33} $bg="#3d5078" $end><FaFacebookF size={23} style={{ marginRight: -3 }} /></Social>
            <span>Curta-nos no <A>Facebook</A></span>
          </Follow>
        </div>
      </Footer>
      <Legal>
        <A>Termos de Serviço</A>
        <Bar $r={8}>|</Bar>
        <A>Privacidade</A>
        <Bar $r={3}>|</Bar>
        <span>© 2020 GTmetrix, todos os direitos reservados.</span>
      </Legal>
    </Page>
  );
}
